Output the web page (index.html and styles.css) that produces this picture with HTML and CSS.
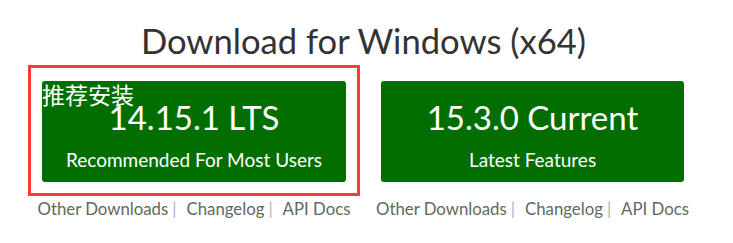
FILE: index.html
```html
<!DOCTYPE html>
<html lang="zh">
<head>
<meta charset="utf-8">
<title>Download for Windows (x64)</title>
<link rel="stylesheet" href="styles.css">
</head>
<body>
<section class="downloads">
  <h1 class="title">Download for Windows (x64)</h1>
  <div class="options">
    <div class="option option--highlight">
      <a class="dl-button" href="#">
        <span class="badge">推荐安装</span>
        <span class="version">14.15.1 LTS</span>
        <span class="subtitle">Recommended For Most Users</span>
      </a>
      <ul class="links">
        <li><a href="#">Other Downloads</a></li>
        <li><a href="#">Changelog</a></li>
        <li><a href="#">API Docs</a></li>
      </ul>
    </div>
    <div class="option">
      <a class="dl-button" href="#">
        <span class="version">15.3.0 Current</span>
        <span class="subtitle">Latest Features</span>
      </a>
      <ul class="links">
        <li><a href="#">Other Downloads</a></li>
        <li><a href="#">Changelog</a></li>
        <li><a href="#">API Docs</a></li>
      </ul>
    </div>
  </div>
</section>
</body>
</html>
```
FILE: styles.css
```css
html, body {
  margin: 0;
  padding: 0;
  background: #fff;
}

body {
  font-family: Lato, "Noto Sans", "Noto Sans CJK SC", sans-serif;
  color: #333;
}

.downloads {
  width: 733px;
}

.title {
  margin: 0;
  padding-top: 20px;
  font-size: 34.6px;
  line-height: 42px;
  font-weight: 400;
  text-align: center;
  color: #333;
  padding-left: 0;
  padding-right: 6px;
}

.options {
  display: flex;
  gap: 35px;
  padding-left: 42px;
  margin-top: 19px;
}

.option {
  position: relative;
  width: 304px;
  display: flex;
  flex-direction: column;
}

.option + .option {
  width: 303px;
}

.option--highlight::before {
  content: "";
  position: absolute;
  left: -14px;
  top: -16px;
  width: 326px;
  height: 125px;
  border: 3px solid #fb3a3a;
  pointer-events: none;
}

.dl-button {
  position: relative;
  display: flex;
  flex-direction: column;
  align-items: center;
  box-sizing: border-box;
  height: 101px;
  padding-top: 16px;
  background: #026e00;
  border-radius: 3px;
  color: #fff;
  text-decoration: none;
}

.badge {
  position: absolute;
  left: 0;
  top: 2px;
  font-family: "Noto Sans CJK SC", sans-serif;
  font-size: 23px;
  line-height: 23px;
  color: #fff;
  white-space: nowrap;
}

.version {
  font-size: 33px;
  line-height: 40px;
  white-space: nowrap;
}

.subtitle {
  margin-top: 11px;
  font-size: 19px;
  line-height: 23px;
  white-space: nowrap;
}

.links {
  display: flex;
  justify-content: center;
  list-style: none;
  margin: 17px 0 0;
  padding: 0;
  font-size: 16.8px;
  line-height: 20px;
  white-space: nowrap;
}

.links li + li::before {
  content: "|";
  color: #aab4c0;
  margin-left: 4px;
  margin-right: 10px;
}

.links a {
  color: #5e6a5c;
  text-decoration: none;
}
```
